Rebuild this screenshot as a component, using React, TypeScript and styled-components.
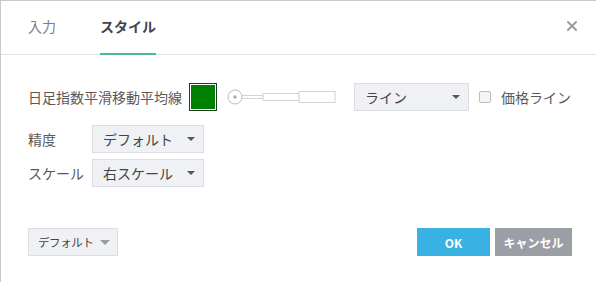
import React, { useState } from 'react';
import styled, { createGlobalStyle } from 'styled-components';

const GlobalStyle = createGlobalStyle`
  html, body {
    margin: 0;
    padding: 0;
    background: #ffffff;
  }
  body {
    font-family: "Noto Sans CJK JP", "Noto Sans", sans-serif;
    color: #4a4a4a;
  }
`;

const Dialog = styled.div`
  width: 596px;
  height: 282px;
  box-sizing: border-box;
  border-top: 1px solid #c9c9c9;
  border-left: 1px solid #c9c9c9;
  background: #fff;
  display: flex;
  flex-direction: column;
`;

const Header = styled.div`
  height: 53px;
  display: flex;
  align-items: stretch;
  padding: 0 0 0 27px;
  border-bottom: 1px solid #e2e2e2;
  position: relative;
`;

const Tab = styled.div<{ active?: boolean }>`
  display: flex;
  align-items: center;
  font-size: 14px;
  margin-right: 44px;
  color: ${({ active }) => (active ? '#3f4450' : '#7a7e88')};
  font-weight: ${({ active }) => (active ? 700 : 400)};
  border-bottom: 2px solid ${({ active }) => (active ? '#4dba87' : 'transparent')};
  margin-bottom: -1px;
  padding-bottom: 2px;
  box-sizing: border-box;
`;

const Close = styled.div`
  position: absolute;
  right: 19px;
  top: 20px;
  width: 10px;
  height: 10px;
  display: flex;
`;

const Body = styled.div`
  flex: 1;
  padding: 28px 0 0 27px;
  display: flex;
  flex-direction: column;
`;

const Row = styled.div<{ gap?: number }>`
  display: flex;
  align-items: center;
  height: 28px;
  margin-bottom: ${({ gap }) => gap ?? 6}px;
`;

const Label = styled.span<{ width?: number }>`
  font-size: 14px;
  color: #595959;
  width: ${({ width }) => (width ? `${width}px` : 'auto')};
  white-space: nowrap;
`;

const Swatch = styled.div`
  width: 28px;
  height: 28px;
  box-sizing: border-box;
  border: 1px solid #1f3a1f;
  padding: 1px;
  background: #fff;
  margin-left: 7px;
  & > div {
    width: 100%;
    height: 100%;
    background: #008000;
  }
`;

const SliderWrap = styled.div`
  margin-left: 10px;
  margin-right: 17px;
  width: 110px;
  height: 28px;
  display: flex;
  align-items: center;
`;

const Select = styled.div<{ width: number }>`
  width: ${({ width }) => width}px;
  height: 28px;
  box-sizing: border-box;
  background: #f0f1f5;
  border: 1px solid #dcdee3;
  display: flex;
  align-items: center;
  justify-content: space-between;
  padding: 0 8px 0 10px;
  font-size: 14px;
  color: #444;
`;

const Caret = styled.span`
  width: 0;
  height: 0;
  border-left: 4px solid transparent;
  border-right: 4px solid transparent;
  border-top: 4px solid #555;
`;

const Check = styled.div`
  width: 10px;
  height: 10px;
  border: 1px solid #b9bcc3;
  border-radius: 2px;
  background: #f4f5f7;
  margin-left: 10px;
  margin-right: 10px;
`;

const Footer = styled.div`
  display: flex;
  align-items: center;
  padding: 0 24px 26px 27px;
`;

const DefaultButton = styled.div`
  height: 28px;
  box-sizing: border-box;
  padding: 0 7px 0 9px;
  background: #f0f1f5;
  border: 1px solid #dcdee3;
  display: flex;
  align-items: center;
  gap: 6px;
  font-size: 11.5px;
  letter-spacing: -0.4px;
  color: #444;
  & ${Caret} {
    border-top-color: #9a9ca4;
    border-left-width: 5px;
    border-right-width: 5px;
    border-top-width: 5px;
  }
`;

const ActionButton = styled.div<{ variant: 'ok' | 'cancel'; width: number }>`
  width: ${({ width }) => width}px;
  height: 28px;
  display: flex;
  align-items: center;
  justify-content: center;
  color: #fff;
  font-size: 12px;
  font-weight: 700;
  background: ${({ variant }) => (variant === 'ok' ? '#3ab1e3' : '#9c9ea6')};
  margin-left: ${({ variant }) => (variant === 'ok' ? 'auto' : '5px')};
`;

const Slider = () => (
  <svg width="110" height="20" viewBox="0 0 110 20">
    <circle cx="8" cy="10" r="7" fill="#fff" stroke="#b8bcc4" strokeWidth="1" />
    <circle cx="8" cy="10" r="1.8" fill="#aab0b8" />
    <rect x="15" y="8.5" width="21" height="3" fill="#fff" stroke="#d0d3d8" />
    <rect x="36" y="6.5" width="36" height="7" fill="#fff" stroke="#d0d3d8" />
    <rect x="72" y="4.5" width="36" height="11" fill="#fff" stroke="#d0d3d8" />
  </svg>
);

const CloseIcon = () => (
  <svg width="10" height="10" viewBox="0 0 10 10">
    <path d="M1 1 L9 9 M9 1 L1 9" stroke="#9a9da4" strokeWidth="2" strokeLinecap="square" />
  </svg>
);

const App: React.FC = () => {
  const [tab] = useState('style');

  return (
    <>
      <GlobalStyle />
      <Dialog>
        <Header>
          <Tab>入力</Tab>
          <Tab active={tab === 'style'}>スタイル</Tab>
          <Close>
            <CloseIcon />
          </Close>
        </Header>
        <Body>
          <Row gap={14}>
            <Label>日足指数平滑移動平均線</Label>
            <Swatch>
              <div />
            </Swatch>
            <SliderWrap>
              <Slider />
            </SliderWrap>
            <Select width={115}>
              ライン
              <Caret />
            </Select>
            <Check />
            <Label>価格ライン</Label>
          </Row>
          <Row>
            <Label width={64}>精度</Label>
            <Select width={112}>
              デフォルト
              <Caret />
            </Select>
          </Row>
          <Row>
            <Label width={64}>スケール</Label>
            <Select width={112}>
              右スケール
              <Caret />
            </Select>
          </Row>
        </Body>
        <Footer>
          <DefaultButton>
            デフォルト
            <Caret />
          </DefaultButton>
          <ActionButton variant="ok" width={73}>
            OK
          </ActionButton>
          <ActionButton variant="cancel" width={77}>
            キャンセル
          </ActionButton>
        </Footer>
      </Dialog>
    </>
  );
};

export default App;
